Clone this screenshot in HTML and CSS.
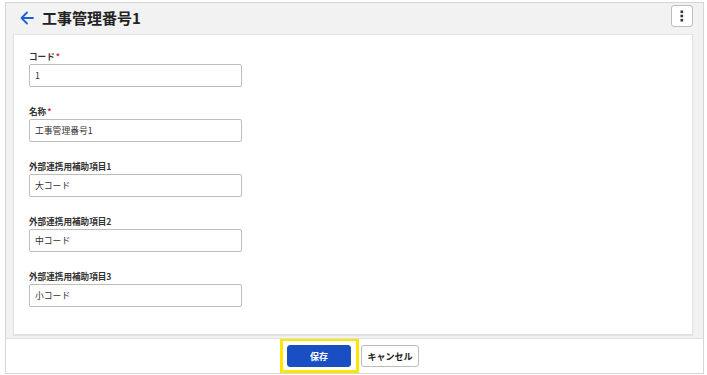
FILE: index.html
```html
<!DOCTYPE html>
<html lang="en">
<head>
  <meta charset="UTF-8">
  <meta name="viewport" content="width=device-width, initial-scale=1.0">
  <title>工事管理番号1</title>
  <link rel="stylesheet" href="styles.css">
</head>
<body>
  <div class="frame">
    <header class="page-head">
      <div class="title-wrap">
        <svg class="back" width="14" height="14" viewBox="0 0 14 14" fill="none" stroke="#1f5fd6" stroke-width="1.8" stroke-linecap="round" stroke-linejoin="round">
          <path d="M13 7H1.5M7 1.5L1.5 7L7 12.5"/>
        </svg>
        <h1>工事管理番号1</h1>
      </div>
      <button class="kebab" type="button">
        <svg width="4" height="12" viewBox="0 0 4 12" fill="#333">
          <rect x="0.5" y="0.5" width="2.6" height="2.6"/>
          <rect x="0.5" y="4.7" width="2.6" height="2.6"/>
          <rect x="0.5" y="8.9" width="2.6" height="2.6"/>
        </svg>
      </button>
    </header>
    <main class="card">
      <div class="field">
        <label>コード<span class="req">*</span></label>
        <input type="text" value="1">
      </div>
      <div class="field">
        <label>名称<span class="req">*</span></label>
        <input type="text" value="工事管理番号1">
      </div>
      <div class="field">
        <label>外部連携用補助項目1</label>
        <input type="text" value="大コード">
      </div>
      <div class="field">
        <label>外部連携用補助項目2</label>
        <input type="text" value="中コード">
      </div>
      <div class="field">
        <label>外部連携用補助項目3</label>
        <input type="text" value="小コード">
      </div>
    </main>
    <footer class="actions">
      <span class="highlight">
        <button class="btn btn-save" type="button">保存</button>
      </span>
      <button class="btn btn-cancel" type="button">キャンセル</button>
    </footer>
  </div>
</body>
</html>
```

FILE: styles.css
```css
body {
  margin: 0;
  padding: 0;
  background: #fff;
  font-family: "Noto Sans CJK JP", "Noto Sans", sans-serif;
  color: #333;
}
.frame {
  margin: 2px 3px 0 5px;
  height: 372px;
  border: 1px solid #d6d6d6;
  background: #f2f2f2;
  display: flex;
  flex-direction: column;
  box-sizing: border-box;
}
.page-head {
  height: 31px;
  display: flex;
  align-items: center;
  justify-content: space-between;
  padding: 0 10px 0 14px;
}
.title-wrap {
  display: flex;
  align-items: center;
  gap: 8px;
}
.back {
  display: block;
}
h1 {
  margin: 0;
  font-size: 15px;
  font-weight: bold;
  color: #222;
  line-height: 20px;
}
.kebab {
  width: 22px;
  height: 22px;
  border: 1px solid #bdbdbd;
  border-radius: 3px;
  background: #fff;
  padding: 0;
  display: flex;
  align-items: center;
  justify-content: center;
  margin-top: -4px;
}
.card {
  margin: 0 10px 0 7px;
  background: #fff;
  border: 1px solid #e3e3e3;
  box-shadow: 0 1px 1px #00000010;
  padding: 14px 15px 0 15px;
  height: 304px;
  box-sizing: border-box;
  display: flex;
  flex-direction: column;
  gap: 17px;
}
.field {
  display: flex;
  flex-direction: column;
  gap: 1px;
}
label {
  font-size: 8.6px;
  font-weight: bold;
  line-height: 14px;
  color: #333;
}
.req {
  color: #d8203a;
  margin-left: 1px;
}
input {
  width: 213px;
  height: 23px;
  box-sizing: border-box;
  border: 1px solid #bdbdbd;
  border-radius: 2px;
  padding: 0 5px;
  font-family: inherit;
  font-size: 8.8px;
  color: #333;
  outline: none;
}
.actions {
  margin-top: 3px;
  flex: 1;
  background: #fff;
  border-top: 1px solid #e0e0e0;
  display: flex;
  align-items: flex-start;
  justify-content: center;
  gap: 2px;
  padding-right: 10px;
}
.highlight {
  display: flex;
  border: 3px solid #ffe600;
  border-top-width: 2px;
  padding: 4px 5px 3px 4px;
}
.btn {
  height: 22px;
  border-radius: 3px;
  font-family: inherit;
  font-size: 9px;
  font-weight: bold;
  padding: 0;
  cursor: pointer;
}
.btn-save {
  width: 64px;
  background: #1a4fc4;
  color: #fff;
  border: 1px solid #1a4fc4;
}
.btn-cancel {
  width: 58px;
  margin-top: 6px;
  background: #fff;
  color: #222;
  border: 1px solid #bdbdbd;
}
```
